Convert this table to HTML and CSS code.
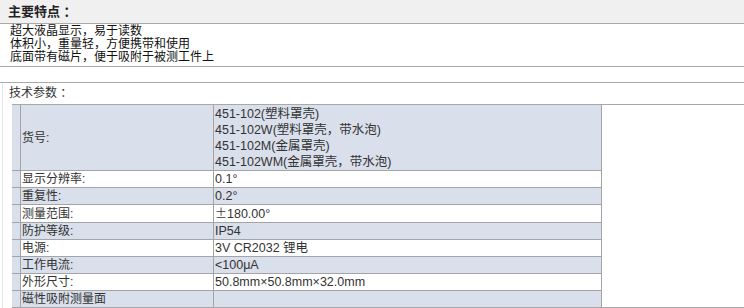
FILE: index.html
```html
<!DOCTYPE html>
<html lang="zh">
<head>
<meta charset="utf-8">
<title>主要特点</title>
<link rel="stylesheet" href="styles.css">
</head>
<body>
<div class="head"><h2 class="head-title">主要特点 ：</h2></div>
<div class="features">
  <p>超大液晶显示，易于读数</p>
  <p>体积小，重量轻，方便携带和使用</p>
  <p>底面带有磁片，便于吸附于被测工件上</p>
</div>
<div class="gap"></div>
<div class="tech">
  <div class="tech-title">技术参数 ：</div>
  <div class="tech-area">
    <table class="spec">
      <tbody>
        <tr class="alt">
          <td class="s"></td>
          <td class="k">货号:</td>
          <td class="v multi">451-102(塑料罩壳)<br>451-102W(塑料罩壳，带水泡)<br>451-102M(金属罩壳)<br>451-102WM(金属罩壳，带水泡)</td>
        </tr>
        <tr><td class="s"></td><td class="k">显示分辨率:</td><td class="v">0.1°</td></tr>
        <tr class="alt"><td class="s"></td><td class="k">重复性:</td><td class="v">0.2°</td></tr>
        <tr><td class="s"></td><td class="k">测量范围:</td><td class="v"><span class="cjk">±</span>180.00°</td></tr>
        <tr class="alt"><td class="s"></td><td class="k">防护等级:</td><td class="v">IP54</td></tr>
        <tr><td class="s"></td><td class="k">电源:</td><td class="v">3V CR2032 锂电</td></tr>
        <tr class="alt"><td class="s"></td><td class="k">工作电流:</td><td class="v">&lt;100μA</td></tr>
        <tr><td class="s"></td><td class="k">外形尺寸:</td><td class="v">50.8mm×50.8mm×32.0mm</td></tr>
        <tr class="alt last"><td class="s"></td><td class="k">磁性吸附测量面</td><td class="v"></td></tr>
      </tbody>
    </table>
  </div>
</div>
</body>
</html>
```

FILE: styles.css
```css
html, body {
  margin: 0;
  padding: 0;
  background: #fff;
}
body {
  font-family: "Liberation Sans", "Noto Sans CJK SC", sans-serif;
  font-size: 12px;
  color: #111;
  width: 744px;
  height: 308px;
  overflow: hidden;
}
.head {
  height: 24px;
  background: #f0f0f0;
  border-bottom: 1px solid #a9a9a9;
  box-sizing: border-box;
  padding-left: 8px;
}
.head-title {
  margin: 0;
  font-size: 13px;
  font-weight: bold;
  line-height: 24px;
  color: #222;
}
.features {
  height: 43px;
  box-sizing: border-box;
  border-bottom: 1px solid #a9a9a9;
  padding: 1px 10px 0;
}
.features p {
  margin: 0;
  line-height: 13px;
  font-size: 12px;
  color: #111;
}
.gap {
  height: 16px;
  box-sizing: border-box;
  border-bottom: 1px solid #a9a9a9;
}
.tech {
  margin-left: 2px;
  border-left: 1px solid #e6e6e6;
  height: 225px;
}
.tech-title {
  height: 21px;
  line-height: 21px;
  padding-left: 6px;
  color: #333;
}
.tech-area {
  margin-left: 9px;
  border-top: 1px solid #a9a9a9;
  border-bottom: 2px solid #a6a6a6;
  display: flex;
}
.spec {
  border-collapse: separate;
  border-spacing: 0;
  table-layout: fixed;
  width: 590px;
  color: #333;
}
.spec td {
  box-sizing: border-box;
  padding: 0;
  height: 17px;
  line-height: 16px;
  border-bottom: 1px solid #a3a4a8;
  background: #fff;
  white-space: nowrap;
}
.spec tr.alt td {
  background: #d9dfeb;
}
.spec tr.last td {
  border-bottom: 0;
  height: 16px;
}
.spec td.s {
  width: 8px;
  background: #d9dfeb;
}
.spec td.k {
  width: 193px;
  border-left: 1px solid #a3a4a8;
  padding-left: 1px;
}
.spec td.v {
  width: 389px;
  border-left: 1px solid #a3a4a8;
  border-right: 1px solid #a3a4a8;
  padding-left: 1px;
  font-size: 12.5px;
}
.spec td.multi {
  height: 66px;
  padding-top: 1px;
  vertical-align: top;
}
.cjk {
  font-family: "Noto Sans CJK SC", sans-serif;
  font-size: 12px;
}
```
